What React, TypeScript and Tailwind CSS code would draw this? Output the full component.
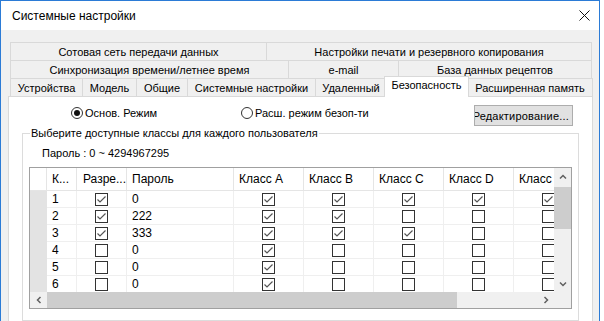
import React from "react";

const F = "font-['Liberation_Sans',Arial,sans-serif]";

function Tab({ w, label, last }: { w: number; label: string; last?: boolean }) {
  return (
    <div
      style={{ width: w }}
      className={`h-[18px] shrink-0 border-t border-l border-[#d9d9d9] bg-[#f0f0f0] flex items-center justify-center text-[11px] leading-[14px] text-black whitespace-nowrap ${last ? "border-r" : ""}`}
    >
      {label}
    </div>
  );
}

function Cb({ c }: { c: boolean | number }) {
  return (
    <svg width="13" height="13" viewBox="0 0 13 13" className="block">
      <rect x="0.5" y="0.5" width="12" height="12" fill="white" stroke="#333" />
      {c ? <polyline points="2.5,6.5 5,9 10.5,3.5" fill="none" stroke="#555" strokeWidth="1.2" /> : null}
    </svg>
  );
}

const rows = [
  { n: 1, en: 1, pw: "0", c: [1, 1, 1, 1, 1] },
  { n: 2, en: 1, pw: "222", c: [1, 1, 0, 0, 0] },
  { n: 3, en: 1, pw: "333", c: [1, 1, 1, 0, 0] },
  { n: 4, en: 0, pw: "0", c: [1, 0, 0, 0, 0] },
  { n: 5, en: 0, pw: "0", c: [1, 0, 0, 0, 0] },
  { n: 6, en: 0, pw: "0", c: [1, 0, 0, 0, 0] },
];

const classHeaders = ["Класс A", "Класс B", "Класс C", "Класс D", "Класс"];

function Chev({ dir }: { dir: "up" | "down" | "left" | "right" }) {
  const pts =
    dir === "up"
      ? "1,5.5 4,2.5 7,5.5"
      : dir === "down"
      ? "1,2.5 4,5.5 7,2.5"
      : dir === "left"
      ? "5.5,1 2.5,4 5.5,7"
      : "2.5,1 5.5,4 2.5,7";
  return (
    <svg width="8" height="8" viewBox="0 0 8 8" className="block">
      <polyline points={pts} fill="none" stroke="#606060" strokeWidth="1.5" />
    </svg>
  );
}

export default function App() {
  return (
    <div className={`w-[604px] h-[321px] overflow-hidden bg-white ${F}`}>
      <div className="w-[600px] h-[321px] border-l border-r border-t border-[#2b7bd6] bg-[#f0f0f0] flex flex-col">
        {/* title bar */}
        <div className="h-[29px] shrink-0 bg-white flex items-center justify-between pl-[11px] pr-[9px]">
          <span className="text-[12px] leading-[16px] text-black">Системные настройки</span>
          <svg width="11" height="11" viewBox="0 0 11 11" className="block">
            <path d="M0.5 0.5 L10.5 10.5 M10.5 0.5 L0.5 10.5" stroke="#111" strokeWidth="1" />
          </svg>
        </div>
        <div className="flex-1 pt-[12px] pl-[7px] flex flex-col min-h-0">
          {/* tabs */}
          <div className="ml-[2px] w-[582px] flex flex-col">
            <div className="flex">
              <Tab w={256} label="Сотовая сеть передачи данных" />
              <Tab w={326} label="Настройки печати и резервного копирования" last />
            </div>
            <div className="flex">
              <Tab w={278} label="Синхронизация времени/летнее время" />
              <Tab w={110} label="e-mail" />
              <Tab w={194} label="База данных рецептов" last />
            </div>
            <div className="flex h-[18px] items-start">
              <Tab w={72} label="Устройства" />
              <Tab w={54} label="Модель" />
              <Tab w={51} label="Общие" />
              <Tab w={128} label="Системные настройки" />
              <Tab w={71} label="Удаленный" />
              <div className="relative z-10 -mx-[2px] -mt-[2px] h-[21px] w-[85px] shrink-0 bg-white border border-b-0 border-[#d9d9d9] flex justify-center pt-[1px] text-[11px] leading-[14px] text-black">
                Безопасность
              </div>
              <Tab w={126} label="Расширенная память" last />
            </div>
          </div>
          {/* panel */}
          <div className="w-[585px] flex-1 bg-white border border-b-0 border-[#d9d9d9] flex flex-col">
            <div className="mt-[8px] flex items-start h-[21px]">
              <div className="ml-[62px] w-[170px] h-[16px] flex items-center gap-[2px]">
                <div className="w-[12px] h-[12px] rounded-full border border-[#333] flex items-center justify-center bg-white">
                  <div className="w-[6px] h-[6px] rounded-full bg-[#111]" />
                </div>
                <span className="text-[11px] leading-[14px] text-black">Основ. Режим</span>
              </div>
              <div className="w-[233px] h-[16px] flex items-center gap-[2px]">
                <div className="w-[12px] h-[12px] rounded-full border border-[#333] bg-white" />
                <span className="text-[11px] leading-[14px] text-black">Расш. режим безоп-ти</span>
              </div>
              <div className="w-[99px] h-[21px] bg-[#e1e1e1] border border-[#adadad] overflow-hidden flex items-center justify-end pr-[3px]">
                <span className="text-[11px] leading-[14px] text-black whitespace-nowrap tracking-[0.2px]">Редактирование...</span>
              </div>
            </div>
            {/* group box */}
            <fieldset className="ml-[13px] w-[557px] border border-[#dcdcdc] flex-1 min-h-0">
              <legend className="ml-[7px] px-[1px] text-[11px] leading-[14px] text-black">
                Выберите доступные классы для каждого пользователя
              </legend>
              <div className="mt-[6px] ml-[19px] text-[11px] leading-[14px] text-black">Пароль : 0 ~ 4294967295</div>
              <div className="mt-[7px] ml-[6px] w-[543px] h-[142px] border border-[#a0a0a0] flex flex-col bg-white">
                <div className="flex h-[124px]">
                  <div className="w-[524px] overflow-hidden">
                    <div className="w-[600px] text-[12px] leading-[14px] text-black">
                      {/* header */}
                      <div className="flex h-[23px] border-b border-[#e5e5e5]">
                        <div className="w-[17px] shrink-0 border-r border-[#e5e5e5]" />
                        <div className="w-[30px] shrink-0 border-r border-[#e5e5e5] flex items-center pl-[5px]">К...</div>
                        <div className="w-[50px] shrink-0 border-r border-[#e5e5e5] flex items-center pl-[6px]">Разре...</div>
                        <div className="w-[107px] shrink-0 border-r border-[#e5e5e5] flex items-center pl-[5px]">Пароль</div>
                        {classHeaders.map((h) => (
                          <div key={h} className="w-[70px] shrink-0 border-r border-[#e5e5e5] flex items-center pl-[5px] whitespace-nowrap">
                            {h}
                          </div>
                        ))}
                      </div>
                      {rows.map((r) => (
                        <div key={r.n} className="flex h-[17px]">
                          <div className="w-[17px] shrink-0 bg-[#e3e3e3]" />
                          <div className="w-[30px] shrink-0 border-r border-b border-[#efefef] flex items-center pl-[5px]">{r.n}</div>
                          <div className="w-[50px] shrink-0 border-r border-b border-[#efefef] flex items-center justify-center">
                            <Cb c={r.en} />
                          </div>
                          <div className="w-[107px] shrink-0 border-r border-b border-[#efefef] flex items-center pl-[5px]">{r.pw}</div>
                          {r.c.map((c, i) => (
                            <div key={i} className="w-[70px] shrink-0 border-r border-b border-[#efefef] flex items-center justify-center">
                              <Cb c={c} />
                            </div>
                          ))}
                        </div>
                      ))}
                    </div>
                  </div>
                  {/* vertical scrollbar */}
                  <div className="w-[17px] shrink-0 bg-[#f0f0f0] flex flex-col">
                    <div className="h-[17px] flex items-center justify-center">
                      <Chev dir="up" />
                    </div>
                    <div className="mt-[2px] h-[42px] bg-[#cdcdcd]" />
                    <div className="flex-1" />
                    <div className="h-[17px] flex items-center justify-center">
                      <Chev dir="down" />
                    </div>
                  </div>
                </div>
                {/* horizontal scrollbar */}
                <div className="flex h-[16px] bg-[#f0f0f0]">
                  <div className="w-[17px] shrink-0 flex items-center justify-center">
                    <Chev dir="left" />
                  </div>
                  <div className="w-[410px] shrink-0 bg-[#cdcdcd]" />
                  <div className="flex-1" />
                  <div className="w-[17px] shrink-0 flex items-center justify-center">
                    <Chev dir="right" />
                  </div>
                  <div className="w-[17px] shrink-0" />
                </div>
              </div>
            </fieldset>
          </div>
        </div>
      </div>
    </div>
  );
}
